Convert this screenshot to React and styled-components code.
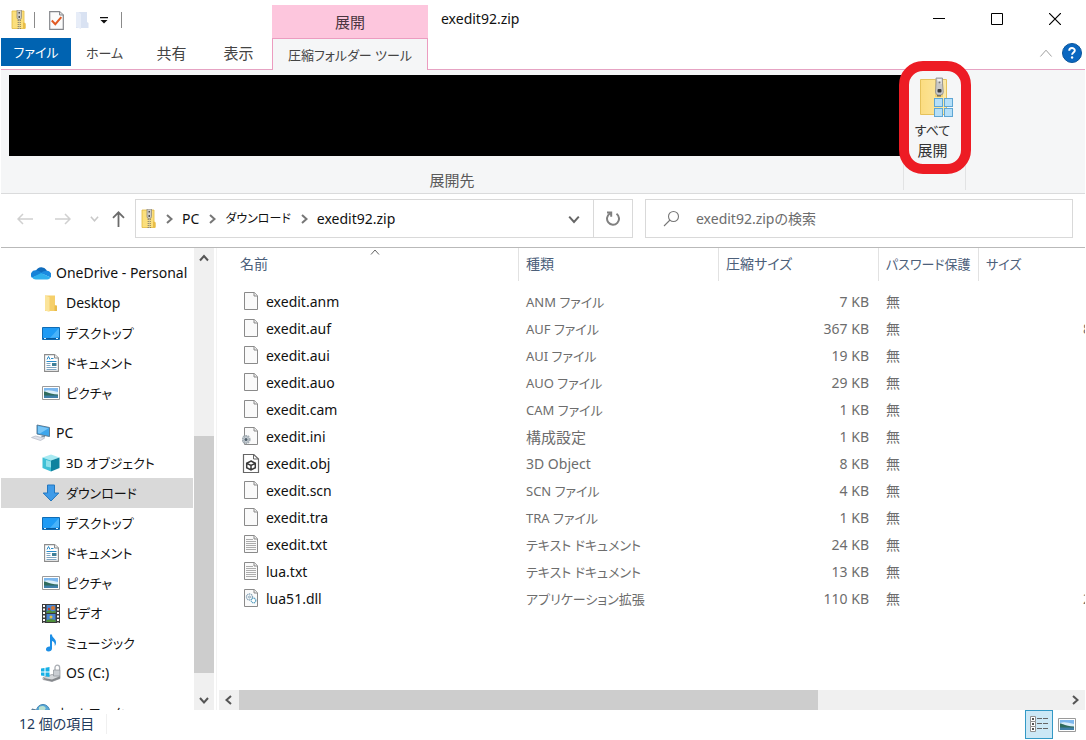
import React from 'react';
import styled, { createGlobalStyle } from 'styled-components';

const GlobalStyle = createGlobalStyle`
  * { box-sizing: border-box; }
  body {
    margin: 0;
    background: #fff;
    color: #111;
    font-family: "Noto Sans", "Noto Sans CJK JP", sans-serif;
    font-feature-settings: "palt";
    font-size: 14px;
    line-height: 20px;
  }
  button, input { font: inherit; font-feature-settings: inherit; color: inherit; }
  button { border: 0; padding: 0; background: none; cursor: default; }
  ul, ol { list-style: none; margin: 0; padding: 0; }
  svg { display: block; flex: none; }
`;

const Window = styled.div`
  display: flex;
  flex-direction: column;
  height: 100vh;
  padding: 0 1px;
  overflow: hidden;
`;

/* ---------- title bar ---------- */

const TitleBar = styled.header`
  display: flex;
  height: 38px;
  padding-right: 1px;
`;

const QuickAccess = styled.div`
  display: flex;
  align-items: center;
  width: 271px;
  padding: 2px 0 0 10px;
`;

const QuickButton = styled.button`
  display: flex;
  align-items: center;
  justify-content: center;
  width: ${(p) => p.$width || 26}px;
  height: 24px;
`;

const QuickDivider = styled.span`
  width: 1px;
  height: 16px;
  margin: 0 8px;
  background: #8a8a8a;
`;

const ContextLabel = styled.div`
  display: flex;
  align-items: center;
  justify-content: center;
  width: 156px;
  margin-top: 5px;
  background: #fdc6dd;
  color: #4a3540;
  font-size: 15px;
`;

const Title = styled.h1`
  flex: 1;
  margin: 0;
  padding: 9px 13px;
  font-size: 14px;
  font-weight: 400;
  line-height: 20px;
`;

const WindowButton = styled.button`
  display: flex;
  align-items: center;
  justify-content: center;
  width: 58px;
  height: 38px;
`;

/* ---------- ribbon ---------- */

const TabRow = styled.nav`
  display: flex;
  align-items: flex-start;
  height: 32px;
  border-bottom: 1px solid #e6a3c3;
`;

const FileTab = styled.button`
  width: 70px;
  height: 28px;
  background: #0063b1;
  color: #fff;
  font-size: 13px;
`;

const Tab = styled.button`
  width: 67px;
  height: 30px;
  color: #444;
  font-size: ${(p) => p.$size || 15}px;
`;

const ActiveTab = styled.button`
  width: 156px;
  height: 32px;
  border: 1px solid #ec9cc0;
  border-bottom: 0;
  background: #f5f6f7;
  color: #444;
  font-size: 13px;
`;

const TabTools = styled.div`
  display: flex;
  align-items: center;
  gap: 9px;
  height: 30px;
  margin-left: auto;
  padding-right: 3px;
`;

const Ribbon = styled.section`
  display: flex;
  height: 124px;
  padding-right: 119px;
  border-bottom: 1px solid #dadbdc;
  background: #f5f6f7;
`;

const RibbonGroup = styled.div`
  display: flex;
  flex-direction: column;
  flex: ${(p) => (p.$wide ? '1' : '0 0 62px')};
  position: relative;
  margin: 5px 0 3px;
  border-right: 1px solid #e2e3e4;
`;

const Destinations = styled.div`
  height: 81px;
  margin-left: 8px;
  background: #000;
`;

const GroupLabel = styled.div`
  padding-top: 14px;
  color: #5a5a5a;
  font-size: 15px;
  text-align: center;
`;

const ExtractAll = styled.button`
  display: flex;
  flex-direction: column;
  align-items: center;
  padding: 2px 4px 0 0;
  color: #333;
  font-size: 15px;

  svg { margin: 0 0 2px 8px; }
`;

const ExtractKana = styled.span`
  font-size: 13px;
`;

const Highlight = styled.span`
  position: absolute;
  inset: -14px -6px 16px -5px;
  z-index: 1;
  border: 10px solid #ed1c24;
  border-radius: 24px;
  pointer-events: none;
`;

/* ---------- address row ---------- */

const AddressRow = styled.div`
  display: flex;
  align-items: center;
  height: 54px;
  padding: 0 12px 4px 8px;
  border-bottom: 1px solid #b9b9b9;
`;

const NavButton = styled.button`
  display: flex;
  align-items: center;
  justify-content: center;
  width: ${(p) => p.$width}px;
  height: 38px;
`;

const AddressBox = styled.div`
  display: flex;
  flex: 1 1 498px;
  height: 39px;
  margin-left: 2px;
  border: 1px solid #d9d9d9;
`;

const Crumbs = styled.ol`
  display: flex;
  flex: 1;
  align-items: center;
  padding-left: 5px;
`;

const Crumb = styled.li`
  display: flex;
  align-items: center;
  font-size: ${(p) => p.$size || 14}px;

  svg { margin: 0 8px; }
`;

const BoxButton = styled.button`
  display: flex;
  align-items: center;
  justify-content: center;
  width: 39px;
  border-left: ${(p) => (p.$divided ? '1px solid #d9d9d9' : '0')};
`;

const SearchBox = styled.label`
  display: flex;
  flex: 1 1 428px;
  align-items: center;
  gap: 16px;
  height: 39px;
  margin-left: 12px;
  padding-left: 17px;
  border: 1px solid #d9d9d9;
`;

const SearchInput = styled.input`
  flex: 1;
  min-width: 0;
  border: 0;
  padding: 0;
  outline: 0;
  background: none;

  &::placeholder { color: #6d6d6d; opacity: 1; }
`;

/* ---------- body ---------- */

const Body = styled.div`
  display: flex;
  flex: 1;
  min-height: 0;
`;

const Tree = styled.nav`
  flex: 0 0 193px;
  overflow: hidden;
  padding-top: 10px;
`;

const TreeSection = styled.ul`
  margin-bottom: 10px;
`;

const TreeItem = styled.button`
  display: flex;
  align-items: center;
  gap: 5px;
  width: 192px;
  height: 30px;
  padding-left: ${(p) => (p.$root ? 30 : 40)}px;
  background: ${(p) => (p.$selected ? '#d9d9d9' : 'transparent')};
  font-size: ${(p) => p.$size}px;
  white-space: nowrap;
`;

const TreeIconBox = styled.span`
  display: flex;
  justify-content: center;
  width: 20px;
`;

const Scrollbar = styled.div`
  display: flex;
  flex: 0 0 20px;
  flex-direction: ${(p) => (p.$horizontal ? 'row' : 'column')};
  background: #f0f0f0;
`;

const ScrollButton = styled.button`
  display: flex;
  flex: 0 0 20px;
  align-items: center;
  justify-content: center;
`;

const Track = styled.div`
  display: flex;
  flex: 1;
  flex-direction: inherit;
`;

const Gap = styled.div`
  flex: ${(p) => p.$share} 1 0;
`;

const Thumb = styled.div`
  flex: ${(p) => p.$share} 1 0;
  background: #cdcdcd;
`;

const Pane = styled.main`
  display: flex;
  flex: 1;
  flex-direction: column;
  min-width: 0;
  margin-left: 2px;
  border-left: 1px solid #f3f3f3;
`;

const ListArea = styled.div`
  flex: 1;
  min-height: 0;
  overflow: hidden;
`;

const FileTable = styled.table`
  width: 922px;
  table-layout: fixed;
  border-collapse: collapse;
`;

const HeadCell = styled.th`
  height: 40px;
  padding: 0;
  vertical-align: top;
  font-weight: 400;
  text-align: left;
`;

const HeadLabel = styled.div`
  position: relative;
  height: 33px;
  padding: 6px 0 0 ${(p) => (p.$first ? 23 : 7)}px;
  border-right: 1px solid #e2e2e2;
  color: #4c607a;
  font-size: ${(p) => p.$size}px;
  line-height: 20px;
  white-space: nowrap;
`;

const SortMark = styled.span`
  position: absolute;
  top: -1px;
  left: calc(50% + 2px);
`;

const Cell = styled.td`
  height: 27px;
  padding: 0 10px 0 7px;
  color: #6d6d6d;
  font-size: ${(p) => p.$size || 14}px;
  line-height: 20px;
  text-align: ${(p) => (p.$right ? 'right' : 'left')};
  white-space: nowrap;
`;

const SizeCell = styled(Cell)`
  padding: 0 0 0 104px;
`;

const FileName = styled.div`
  display: flex;
  align-items: center;
  gap: 6px;
  padding-left: 18px;
  color: #111;
`;

const FileIconBox = styled.span`
  height: 20px;
`;

const ListScroll = styled.div`
  display: flex;
  flex-direction: column;
  padding-left: 2px;
`;

/* ---------- status bar ---------- */

const StatusBar = styled.footer`
  display: flex;
  align-items: flex-start;
  height: 30px;
  padding: 0 4px 0 18px;
  color: #1e395b;
`;

const ItemCount = styled.span`
  margin-top: 4px;
  padding-right: 12px;
  border-right: 1px solid #f0f0f0;
`;

const ViewButton = styled.button`
  display: flex;
  align-items: center;
  justify-content: center;
  width: 28px;
  height: 29px;
  border: ${(p) => (p.$on ? '1px solid #3399c6' : '0')};
  background: ${(p) => (p.$on ? '#cce8f6' : 'transparent')};
`;

const ViewButtons = styled.div`
  display: flex;
  margin-left: auto;
`;

/* ---------- icons ---------- */

const Chevron = ({ dir, size = 10, color = '#555', width = 2 }) => {
  const d = {
    up: 'M1 7.5 5 3 9 7.5',
    down: 'M1 3 5 7.5 9 3',
    left: 'M7 1 2.5 5 7 9',
    right: 'M3 1 7.5 5 3 9',
  }[dir];
  return (
    <svg width={size} height={size} viewBox="0 0 10 10" fill="none" stroke={color} strokeWidth={width}>
      <path d={d} vectorEffect="non-scaling-stroke" />
    </svg>
  );
};

const ZipIcon = () => (
  <svg width="15" height="20" viewBox="0 0 15 20">
    <path d="M1 1h12v12l1 1v4.500H1z" fill="#fbdf7c" stroke="#e2b93f" strokeWidth=".8" />
    <path d="M12 12.500 14.500 13v5.500H12z" fill="#e9bd45" />
    <path d="M6 0h4.500v7.500a2.250 2.250 0 0 1-4.500 0z" fill="#cfcdc6" stroke="#86837a" strokeWidth=".7" />
    <path d="M7.500 2h1.500v1.500H7.500zM7.500 6h1.500v2H7.500z" fill="#55534e" />
    <path d="M8.200 10v9" stroke="#7b7258" strokeWidth="3" strokeDasharray="1 1" />
    <path d="M8.200 10v9" stroke="#d8cfa8" strokeWidth="1" />
  </svg>
);

const BigZipIcon = () => (
  <svg width="34" height="41" viewBox="0 0 34 41">
    <defs>
      <linearGradient id="bigzip" x1="0" x2="1">
        <stop offset="0" stopColor="#fbdc80" />
        <stop offset="1" stopColor="#fbe9a8" />
      </linearGradient>
    </defs>
    <path d="M.5 2.500h26v35H.5z" fill="url(#bigzip)" stroke="#e5c25c" />
    <path d="M15 2h8v18h-8z" fill="#f0d070" />
    <path d="M19 18v8" stroke="#6b6450" strokeWidth="4" strokeDasharray="1.500 1.500" />
    <path d="M16 1h6.500v5l.8 9a3 3 0 0 1-3 3h-1.800a3 3 0 0 1-3-3l.5-9z" fill="#c8c8c8" stroke="#8c8c8c" strokeWidth=".8" />
    <path d="M17 2h4.500v5h-3z" fill="#eee" />
    <path d="M18.500 4.500h2v2h-2z" fill="#777" />
    <rect x="17.500" y="12" width="4" height="3.500" rx="1" fill="#3c3c3c" />
    {[[14.5, 21.5], [24.5, 21.5], [14.5, 31.5], [24.5, 31.5]].map(([x, y]) => (
      <rect key={`${x}-${y}`} x={x} y={y} width="8" height="8" fill="#b5dff8" stroke="#5ea6d4" />
    ))}
  </svg>
);

const PropertiesIcon = () => (
  <svg width="15" height="19" viewBox="0 0 15 19">
    <path d="M.7.7h9.800L14.300 4v14.300H.7z" fill="#fbfbfb" stroke="#85878c" strokeWidth="1.200" />
    <path d="M10.500.7V4h3.800" fill="#ddd" stroke="#85878c" />
    <path d="m2.800 9.500 3.500 3.700 6-7" fill="none" stroke="#e25a22" strokeWidth="2" />
  </svg>
);

const PaleFolder = () => (
  <svg width="13" height="17" viewBox="0 0 13 17">
    <path d="M0 0h11v10l1.500 1v5H0z" fill="#d9e2f2" />
    <path d="M0 0h2.500L5 2v15l-5-2z" fill="#e7edf8" />
  </svg>
);

const FolderIcon = () => (
  <svg width="12" height="17" viewBox="0 0 12 17">
    <path d="M0 .5h10V10l1.500 1v5H0z" fill="#f5cf6a" />
    <path d="M0 .5 4.500 2v15L0 15.500z" fill="#fbe49a" />
    <path d="M9.500 10.500h2.500V16H9.500z" fill="#e9bb4a" />
  </svg>
);

const OneDriveIcon = () => (
  <svg width="20" height="14" viewBox="0 0 20 14">
    <path d="M5 4.500A6 6 0 0 1 15.500 4l.8 2.300L9 9 3 6z" fill="#0f6cbd" />
    <path d="M4.800 4.200a4.600 4.600 0 0 0-3.900 7.500L12 7.500 8 5z" fill="#1683d8" />
    <path d="M15 5a4.300 4.300 0 0 1 4.700 6.500L10 7.200C11.300 5.500 13 4.700 15 5z" fill="#1b8be0" />
    <path d="M1 11.500 10.200 7l9.300 4.600A3.600 3.600 0 0 1 16.300 13.500H5a4.700 4.700 0 0 1-4-2z" fill="#2eb0ee" />
  </svg>
);

const DesktopIcon = () => (
  <svg width="18" height="13" viewBox="0 0 18 13">
    <path d="M.5.5h17v12H.5z" fill="#1e9bf5" stroke="#0f6cb5" />
    <path d="M17 1v9L8 11z" fill="#49b3fa" />
    <path d="M1 11.500h16" stroke="#0b5a9b" />
    <path d="M2 11.500h2M14 11.500h2" stroke="#d8efff" />
  </svg>
);

const DocumentIcon = () => (
  <svg width="15" height="18" viewBox="0 0 15 18">
    <path d="M.6.6h10L14.400 4v13.400H.6z" fill="#fff" stroke="#8b8b8b" strokeWidth="1.100" />
    <path d="M10.500.6V4h3.900" fill="#eee" stroke="#8b8b8b" />
    <path d="M3 5.500 4.500 2.500 6 5.500M7 4.500h2.500M2.500 7.500h10" fill="none" stroke="#2a8cc9" />
    <path d="M2.500 9.500h4M2.500 11.500h4M2.500 13.500h10M2.500 15.500h10" stroke="#7fa6c2" />
    <path d="M8 9h4.500v3H8z" fill="#3f7f98" />
  </svg>
);

const PictureIcon = () => (
  <svg width="18" height="14" viewBox="0 0 18 14">
    <path d="M.5.5h17v13H.5z" fill="#fff" stroke="#9a9a9a" />
    <path d="M2 2h14v10H2z" fill="#7db8ee" />
    <path d="M2 5q4-2 14 1v3H2z" fill="#d9edf9" />
    <path d="M2 5.500c3 0 4 2.500 14 3V10H2z" fill="#2f6b5c" />
    <path d="M2 9.500h14V12H2z" fill="#3f7fa8" />
  </svg>
);

const PcIcon = () => (
  <svg width="20" height="18" viewBox="0 0 20 18">
    <path d="m6 1 12.500 2.500v9L6 10z" fill="#3ea6ec" stroke="#56738a" strokeWidth=".9" />
    <path d="m7 2 10.500 2.200L9 9.500 7 9z" fill="#79c6f7" />
    <path d="m11 11.500 3 .6v1.500l-4-.8z" fill="#8195a5" />
    <path d="m.5 13.500 4-1.500 9 2.200-4 2.300z" fill="#dfe2ea" stroke="#b3b8c4" strokeWidth=".7" />
  </svg>
);

const CubeIcon = () => (
  <svg width="18" height="18" viewBox="0 0 18 18">
    <path d="M9 .5 17.500 3.500 9 6.500.5 3.500z" fill="#a9eaf2" />
    <path d="M.5 3.500 9 6.500v11L.5 14z" fill="#3fc0d6" />
    <path d="M17.500 3.500 9 6.500v11l8.500-3.500z" fill="#0e839f" />
    <path d="M4 6 9 7.500v6L4 12.500z" fill="#8fe0ea" />
  </svg>
);

const DownloadIcon = () => (
  <svg width="18" height="18" viewBox="0 0 18 18">
    <path d="M5.500 1h7v8h4.300L9 17 1.200 9h4.300z" fill="#3f9be8" stroke="#2377bf" />
  </svg>
);

const VideoIcon = () => (
  <svg width="18" height="19" viewBox="0 0 18 19">
    <path d="M0 0h18v19H0z" fill="#3a3a3a" />
    <path d="M2 1v18M16 1v18" stroke="#fff" strokeWidth="2" strokeDasharray="2 1.500" />
    <path d="M4.500 1h9v8h-9zM4.500 10h9v8h-9z" fill="#4a86cf" />
    <path d="M4.500 7.500 8 6l2 1.500 3.500-1V9h-9zM4.500 16 9 15l4.500 1v2h-9z" fill="#4f8f3a" />
    <circle cx="11" cy="4" r="2" fill="#d7762e" />
    <circle cx="7" cy="5" r="1.200" fill="#c23b32" />
    <circle cx="9" cy="13" r="1.500" fill="#e4c23d" />
  </svg>
);

const MusicIcon = () => (
  <svg width="18" height="18" viewBox="0 0 18 18">
    <path d="M8 .5h2c0 3.500 4 4 4 8 0 1.500-.5 2.500-1.200 3.500.3-3-1-4.500-2.800-5v7.500c0 2-1.600 3-3.500 3S3.800 16.300 4 15c.2-1.800 2-2.800 4-2.500z" fill="#1d8fe6" />
  </svg>
);

const DriveIcon = () => (
  <svg width="20" height="18" viewBox="0 0 20 18">
    <path d="m2 13.500 9-3 8 1.500v2.500l-8 3-9-2z" fill="#d5d7da" stroke="#8e9196" strokeWidth=".7" />
    <path d="m3 14 8 1.500 8-3.300v2.300l-8 3-8-2z" fill="#85888c" />
    <path d="M0 4.500 3.500 4v3.500H0zM4.500 3.800 8.500 3v4.500h-4zM0 8.500h3.500V12L0 11.500zM4.500 8.500h4V13l-4-.8z" fill="#16b0e6" />
    <path d="M14 6V3.500a2.300 2.300 0 0 1 4.600 0V6" fill="none" stroke="#a9adb3" strokeWidth="1.300" />
    <path d="M12.500 6H19v6h-6.500z" fill="#c9cdd2" stroke="#8d9298" strokeWidth=".7" />
  </svg>
);

const NetworkIcon = () => (
  <svg width="20" height="18" viewBox="0 0 20 18">
    <circle cx="12" cy="7" r="6.500" fill="#5aa9d8" stroke="#3c83b3" />
    <path d="M8 3q4-2 6 0t-2 4-4 1z" fill="#b9e0d0" />
    <path d="m1 5 4 1v5l-4-1z" fill="#3ea6ec" stroke="#56738a" />
  </svg>
);

const FileIcon = ({ kind }) => (
  <svg width="18" height="20" viewBox="0 0 18 20">
    {kind === 'obj' ? (
      <g fill="none" stroke="#3a3a3a" strokeWidth="1.500">
        <path d="M1.500.5h10.200L16.500 5v13.500h-15z" fill="#fff" stroke="#666" strokeWidth="1.200" />
        <path d="M11.500.5V5h5" stroke="#666" strokeWidth="1" />
        <path d="m9 7 4.300 2.300v4.400L9 16l-4.300-2.300V9.300zM4.700 9.300 9 11.500l4.300-2.200M9 11.500V16" />
      </g>
    ) : (
      <g>
        <path d="M2.500.5h9.800l3.200 3.200v13.800h-13z" fill="#fafafa" stroke="#8a8a8a" />
        <path d="M12 .5V4h3.500" fill="#ececec" stroke="#8a8a8a" />
      </g>
    )}
    {kind === 'txt' && (
      <path d="M4 4.500h7M4 6.500h10M4 8.500h10M4 10.500h10M4 12.500h10M4 14.500h10" stroke="#a3a3a3" strokeWidth=".9" />
    )}
    {kind === 'ini' && (
      <g fill="none">
        <circle cx="4" cy="12.500" r="3.500" fill="#c9d0d6" stroke="#a3adb4" strokeWidth="2.200" strokeDasharray="1.600 .6" />
        <circle cx="4" cy="12.500" r="1.500" fill="#4f5f6b" />
      </g>
    )}
    {kind === 'dll' && (
      <g fill="#fff" stroke="#89a5b8">
        <circle cx="7.500" cy="8" r="3" strokeWidth="1.400" strokeDasharray="1.300 .6" />
        <circle cx="7.500" cy="8" r="1" />
        <circle cx="11.500" cy="11.500" r="2.300" stroke="#5fa4c4" strokeWidth="1.300" strokeDasharray="1.200 .5" />
      </g>
    )}
  </svg>
);

/* ---------- data ---------- */

const tree = [
  [
    { name: 'OneDrive - Personal', icon: OneDriveIcon, root: true, size: 14 },
    { name: 'Desktop', icon: FolderIcon, size: 14 },
    { name: 'デスクトップ', icon: DesktopIcon },
    { name: 'ドキュメント', icon: DocumentIcon },
    { name: 'ピクチャ', icon: PictureIcon },
  ],
  [
    { name: 'PC', icon: PcIcon, root: true, size: 14 },
    { name: '3D オブジェクト', icon: CubeIcon },
    { name: 'ダウンロード', icon: DownloadIcon, selected: true },
    { name: 'デスクトップ', icon: DesktopIcon },
    { name: 'ドキュメント', icon: DocumentIcon },
    { name: 'ピクチャ', icon: PictureIcon },
    { name: 'ビデオ', icon: VideoIcon },
    { name: 'ミュージック', icon: MusicIcon },
    { name: 'OS (C:)', icon: DriveIcon, size: 14 },
  ],
  [{ name: 'ネットワーク', icon: NetworkIcon, root: true }],
];

const columns = [
  { label: '名前', width: 302, size: 14 },
  { label: '種類', width: 200, size: 14 },
  { label: '圧縮サイズ', width: 160, size: 14 },
  { label: 'パスワード保護', width: 100, size: 13 },
  { label: 'サイズ', width: 160, size: 13 },
];

const files = [
  ['exedit.anm', 'ANM ファイル', '7 KB', ''],
  ['exedit.auf', 'AUF ファイル', '367 KB', '8'],
  ['exedit.aui', 'AUI ファイル', '19 KB', ''],
  ['exedit.auo', 'AUO ファイル', '29 KB', ''],
  ['exedit.cam', 'CAM ファイル', '1 KB', ''],
  ['exedit.ini', '構成設定', '1 KB', ''],
  ['exedit.obj', '3D Object', '8 KB', ''],
  ['exedit.scn', 'SCN ファイル', '4 KB', ''],
  ['exedit.tra', 'TRA ファイル', '1 KB', ''],
  ['exedit.txt', 'テキスト ドキュメント', '24 KB', ''],
  ['lua.txt', 'テキスト ドキュメント', '13 KB', ''],
  ['lua51.dll', 'アプリケーション拡張', '110 KB', '2'],
];

const typeSize = (type) => {
  if (type === '構成設定') return 15;
  return /[ァ-ヶ]/.test(type) ? 13 : 14;
};

export default function App() {
  return (
    <Window>
      <GlobalStyle />
      <TitleBar>
        <QuickAccess>
          <ZipIcon />
          <QuickDivider />
          <QuickButton aria-label="プロパティ"><PropertiesIcon /></QuickButton>
          <QuickButton aria-label="新しいフォルダー"><PaleFolder /></QuickButton>
          <QuickButton $width={18} aria-label="カスタマイズ">
            <svg width="8" height="7" viewBox="0 0 8 7"><path d="M0 0h8v1.300H0zM.5 3h7L4 6.500z" fill="#111" /></svg>
          </QuickButton>
          <QuickDivider />
        </QuickAccess>
        <ContextLabel>展開</ContextLabel>
        <Title>exedit92.zip</Title>
        <WindowButton aria-label="最小化">
          <svg width="12" height="12"><path d="M0 5.500h12" stroke="#000" /></svg>
        </WindowButton>
        <WindowButton aria-label="最大化">
          <svg width="12" height="12"><path d="M.5.5h11v11H.5z" fill="none" stroke="#000" /></svg>
        </WindowButton>
        <WindowButton aria-label="閉じる">
          <svg width="12" height="12"><path d="m0 0 12 12M12 0 0 12" stroke="#000" strokeWidth="1.200" /></svg>
        </WindowButton>
      </TitleBar>

      <TabRow>
        <FileTab>ファイル</FileTab>
        <Tab $size={13}>ホーム</Tab>
        <Tab>共有</Tab>
        <Tab>表示</Tab>
        <ActiveTab>圧縮フォルダー ツール</ActiveTab>
        <TabTools>
          <button aria-label="リボンを折りたたむ"><Chevron dir="up" size={14} color="#a0a0a0" width={1} /></button>
          <button aria-label="ヘルプ">
            <svg width="20" height="20" viewBox="0 0 20 20">
              <circle cx="10" cy="10" r="9.500" fill="#0a67c0" stroke="#0b559b" />
              <path d="M7.200 7.700c0-3.600 5.600-3.400 5.600-.3 0 2-2.700 2.100-2.700 4.300" fill="none" stroke="#fff" strokeWidth="1.900" />
              <circle cx="10.100" cy="14.500" r="1.200" fill="#fff" />
            </svg>
          </button>
        </TabTools>
      </TabRow>

      <Ribbon>
        <RibbonGroup $wide>
          <Destinations />
          <GroupLabel>展開先</GroupLabel>
        </RibbonGroup>
        <RibbonGroup>
          <ExtractAll>
            <BigZipIcon />
            <ExtractKana>すべて</ExtractKana>
            <span>展開</span>
          </ExtractAll>
          <Highlight />
        </RibbonGroup>
      </Ribbon>

      <AddressRow>
        <NavButton $width={32} aria-label="戻る">
          <svg width="16" height="12" viewBox="0 0 16 12" fill="none" stroke="#d0d0d0" strokeWidth="1.500"><path d="M1 6h15M6 1 1 6l5 5" /></svg>
        </NavButton>
        <NavButton $width={44} aria-label="進む">
          <svg width="16" height="12" viewBox="0 0 16 12" fill="none" stroke="#d0d0d0" strokeWidth="1.500"><path d="M0 6h15M10 1l5 5-5 5" /></svg>
        </NavButton>
        <NavButton $width={18} aria-label="最近表示した場所"><Chevron dir="down" size={9} color="#c8c8c8" width={1.5} /></NavButton>
        <NavButton $width={30} aria-label="上へ">
          <svg width="13" height="16" viewBox="0 0 13 16" fill="none" stroke="#6b6b6b" strokeWidth="1.800"><path d="M6.500 16V1M1 6.800l5.500-5.500L12 6.800" /></svg>
        </NavButton>
        <AddressBox>
          <Crumbs>
            <li><ZipIcon /></li>
            <Crumb><Chevron dir="right" color="#777" width={2} />PC</Crumb>
            <Crumb $size={12}><Chevron dir="right" color="#777" width={2} />ダウンロード</Crumb>
            <Crumb><Chevron dir="right" color="#777" width={2} />exedit92.zip</Crumb>
          </Crumbs>
          <BoxButton aria-label="以前の場所"><Chevron dir="down" size={12} color="#666" /></BoxButton>
          <BoxButton $divided aria-label="更新">
            <svg width="14" height="15" viewBox="0 0 14 15" fill="none" stroke="#808080" strokeWidth="2">
              <path d="M4 2.500a6 6 0 1 0 6.500.3M1 1.500h4.200v4.300" />
            </svg>
          </BoxButton>
        </AddressBox>
        <SearchBox>
          <svg width="17" height="17" viewBox="0 0 17 17" fill="none" stroke="#777" strokeWidth="1.100">
            <circle cx="10.500" cy="6.500" r="5" /><path d="M7 10 1 16" />
          </svg>
          <SearchInput type="text" aria-label="検索" placeholder="exedit92.zipの検索" />
        </SearchBox>
      </AddressRow>

      <Body>
        <Tree>
          {tree.map((section) => (
            <TreeSection key={section[0].name}>
              {section.map(({ name, icon: Icon, root, selected, size = 13 }) => (
                <li key={name}>
                  <TreeItem $root={root} $selected={selected} $size={size}>
                    <TreeIconBox><Icon /></TreeIconBox>
                    {name}
                  </TreeItem>
                </li>
              ))}
            </TreeSection>
          ))}
        </Tree>
        <Scrollbar>
          <ScrollButton aria-label="上にスクロール"><Chevron dir="up" /></ScrollButton>
          <Track>
            <Gap $share={168} />
            <Thumb $share={237} />
            <Gap $share={17} />
          </Track>
          <ScrollButton aria-label="下にスクロール"><Chevron dir="down" /></ScrollButton>
        </Scrollbar>

        <Pane>
          <ListArea>
            <FileTable>
              <colgroup>
                {columns.map((c) => <col key={c.label} width={c.width} />)}
              </colgroup>
              <thead>
                <tr>
                  {columns.map((c, i) => (
                    <HeadCell key={c.label} scope="col">
                      <HeadLabel $first={i === 0} $size={c.size}>
                        {c.label}
                        {i === 0 && <SortMark><Chevron dir="up" color="#666" width={1} /></SortMark>}
                      </HeadLabel>
                    </HeadCell>
                  ))}
                </tr>
              </thead>
              <tbody>
                {files.map(([name, type, packed, size]) => (
                  <tr key={name}>
                    <Cell>
                      <FileName>
                        <FileIconBox><FileIcon kind={name.split('.')[1]} /></FileIconBox>
                        {name}
                      </FileName>
                    </Cell>
                    <Cell $size={typeSize(type)}>{type}</Cell>
                    <Cell $right>{packed}</Cell>
                    <Cell>無</Cell>
                    <SizeCell>{size}</SizeCell>
                  </tr>
                ))}
              </tbody>
            </FileTable>
          </ListArea>
          <ListScroll>
            <Scrollbar $horizontal>
              <ScrollButton aria-label="左にスクロール"><Chevron dir="left" /></ScrollButton>
              <Track>
                <Thumb $share={579} />
                <Gap $share={247} />
              </Track>
              <ScrollButton aria-label="右にスクロール"><Chevron dir="right" /></ScrollButton>
            </Scrollbar>
          </ListScroll>
        </Pane>
      </Body>

      <StatusBar>
        <ItemCount>12 個の項目</ItemCount>
        <ViewButtons>
          <ViewButton $on aria-label="詳細">
            <svg width="18" height="17" viewBox="0 0 18 17">
              {[0, 5, 10].map((y) => (
                <g key={y}>
                  <path d={`M.5 ${y + 0.5}h5v5h-5z`} fill="#fff" stroke="#909090" />
                  <path d={`M2 ${y + 2}h2v2H2z`} fill="#555" />
                  <path d={`M7 ${y + 2.5}h5M13 ${y + 2.5}h5`} stroke="#666" />
                </g>
              ))}
            </svg>
          </ViewButton>
          <ViewButton aria-label="大アイコン"><PictureIcon /></ViewButton>
        </ViewButtons>
      </StatusBar>
    </Window>
  );
}
